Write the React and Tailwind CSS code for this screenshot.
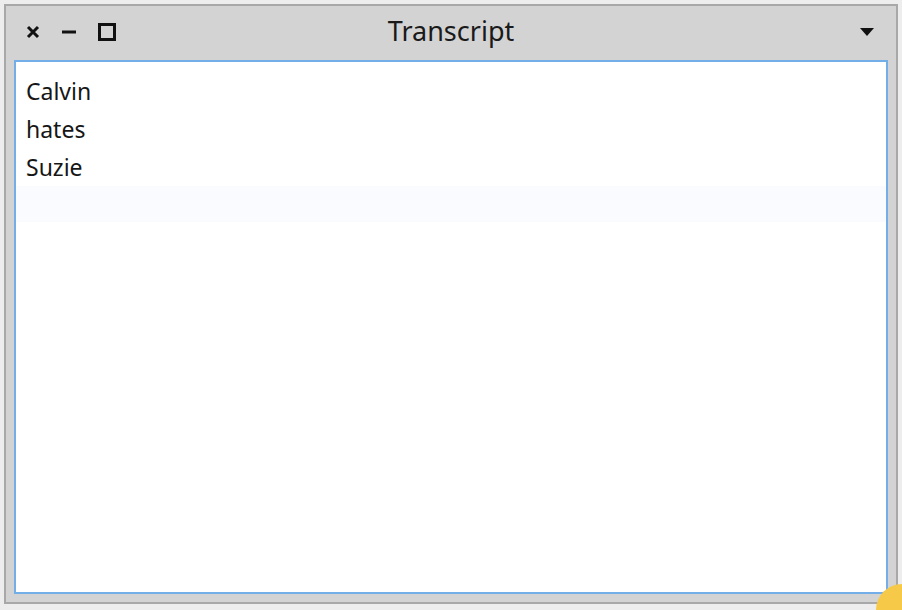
import React from "react";

export default function App() {
  return (
    <div className="w-[902px] h-[610px] bg-[#ededed] relative overflow-hidden" style={{ fontFamily: '"Noto Sans", "Open Sans", sans-serif' }}>
      <div className="absolute left-[4px] top-[4px] w-[894px] h-[600px] bg-[#d3d3d3] border-2 border-[#a8a8a8] flex flex-col">
        {/* Title bar */}
        <div className="h-[54px] flex items-center relative px-[20px]">
          <div className="flex items-center gap-[22px] -mt-[2px]">
            <svg width="14" height="14" viewBox="0 0 14 14">
              <path d="M2 2 L12 12 M12 2 L2 12" stroke="#111" strokeWidth="3" />
            </svg>
            <svg width="14" height="14" viewBox="0 0 14 14">
              <path d="M0 7 H14" stroke="#111" strokeWidth="3" />
            </svg>
            <svg width="18" height="18" viewBox="0 0 18 18">
              <rect x="1.5" y="1.5" width="15" height="15" fill="none" stroke="#111" strokeWidth="3" />
            </svg>
          </div>
          <div className="absolute left-0 right-0 top-0 h-[50px] flex items-center justify-center text-[27px] text-[#1a1a1a] pointer-events-none">
            Transcript
          </div>
          <svg className="ml-auto mr-[1px] -mt-[2px]" width="16" height="10" viewBox="0 0 16 10">
            <path d="M1 1 H15 L8 9 Z" fill="#111" />
          </svg>
        </div>
        {/* Text pane */}
        <div className="ml-[8px] mr-[8px] h-[534px] bg-white border-2 border-[#74aee8]">
          <div className="pt-[10px] px-[10px] text-[23px] leading-[38px] text-[#161616]">
            <div>Calvin</div>
            <div>hates</div>
            <div>Suzie</div>
          </div>
          <div className="h-[36px] bg-[#f9fbfe]"></div>
        </div>
      </div>
      <div className="absolute left-[876px] top-[584px] w-[52px] h-[52px] rounded-full bg-[#f7c948]"></div>
    </div>
  );
}
